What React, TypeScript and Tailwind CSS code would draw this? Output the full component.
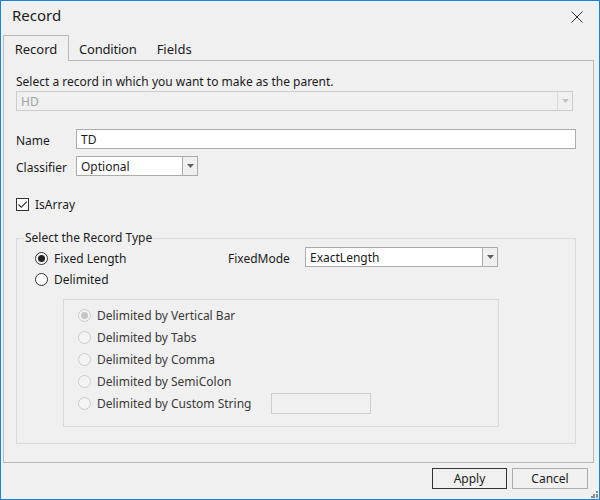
const font = { fontFamily: '"Noto Sans", "Segoe UI", sans-serif' };

function Arrow({ disabled }: { disabled?: boolean }) {
  return (
    <svg width="7" height="4" viewBox="0 0 7 4">
      <path d="M0 0h7L3.5 4z" fill={disabled ? "#c4c4c4" : "#606060"} />
    </svg>
  );
}

function Combo({ value, width, disabled }: { value: string; width: string; disabled?: boolean }) {
  return (
    <div
      className={`flex h-[20px] shrink-0 ${width} border ${
        disabled ? "border-[#cccccc] bg-[#f0f0f0] text-[#a0a0a0]" : "border-[#ababab] bg-white text-[#1b1b1b]"
      }`}
    >
      <div className="flex flex-1 items-center pl-[4px] pt-[2px]">{value}</div>
      <div
        className={`flex w-[15px] items-center justify-center border-l ${
          disabled ? "border-[#dadada]" : "border-[#ababab] bg-[#f0f0f0]"
        }`}
      >
        <Arrow disabled={disabled} />
      </div>
    </div>
  );
}

function Radio({ checked, disabled }: { checked?: boolean; disabled?: boolean }) {
  return (
    <span
      className={`flex h-[13px] w-[13px] shrink-0 items-center justify-center rounded-full border ${
        disabled ? "border-[#cccccc] bg-[#f4f4f4]" : "border-[#333333] bg-white"
      }`}
    >
      {checked && (
        <span
          className={`h-[7px] w-[7px] rounded-full ${disabled ? "bg-[#c4c4c4]" : "bg-[#222222]"}`}
        />
      )}
    </span>
  );
}

const delimiters = [
  "Delimited by Vertical Bar",
  "Delimited by Tabs",
  "Delimited by Comma",
  "Delimited by SemiColon",
];

export default function App() {
  return (
    <div
      style={font}
      className="relative flex h-[500px] w-[600px] flex-col border border-[#1883d7] bg-[#f0f0f0] text-[12px] leading-[16px] text-[#1b1b1b]"
    >
      {/* title bar */}
      <div className="flex h-[34px] shrink-0 items-center justify-between pl-[11px] pr-[16px]">
        <span className="mb-[6px] text-[15px] leading-none">Record</span>
        <svg width="12" height="12" viewBox="0 0 12 12" className="mb-[3px]">
          <path d="M0.5 0.5l11 11M11.5 0.5l-11 11" stroke="#333" strokeWidth="1" />
        </svg>
      </div>

      {/* tabs */}
      <div className="relative z-10 ml-[2px] flex h-[26px] items-stretch text-[13px]">
        <div className="flex w-[66px] items-center justify-center border-l border-r border-t border-[#b9b9b9] bg-[#f0f0f0] pt-[1px]">
          Record
        </div>
        <div className="flex items-center pl-[10px] pt-[1px] tracking-[-0.2px]">Condition</div>
        <div className="flex items-center pl-[20px] pt-[1px]">Fields</div>
      </div>

      {/* panel */}
      <div className="-mt-px ml-[2px] flex h-[403px] w-[591px] flex-col border border-[#b9b9b9] pl-[12px]">
        <div className="mt-[13px]">Select a record in which you want to make as the parent.</div>
        <div className="mt-[1px]">
          <Combo value="HD" width="w-[557px]" disabled />
        </div>

        <div className="mt-[18px] flex h-[20px] items-center">
          <span className="w-[60px] pt-[3px]">Name</span>
          <div className="flex h-[20px] w-[500px] items-center border border-[#ababab] bg-white pl-[4px] pt-[2px]">TD</div>
        </div>
        <div className="mt-[7px] flex h-[20px] items-center">
          <span className="w-[60px] pt-[3px]">Classifier</span>
          <Combo value="Optional" width="w-[122px]" />
        </div>

        <div className="mt-[22px] flex h-[13px] items-center">
          <span className="flex h-[13px] w-[13px] items-center justify-center border border-[#333333] bg-white">
            <svg width="11" height="11" viewBox="0 0 11 11">
              <path d="M1.5 5.5l2.8 2.8L9.8 2.6" stroke="#222" strokeWidth="1.1" fill="none" />
            </svg>
          </span>
          <span className="ml-[6px] pt-[1px]">IsArray</span>
        </div>

        <fieldset className="mt-[19px] w-[560px] border border-[#dadada] pb-[16px]">
          <legend className="ml-[7px] px-[1px]">Select the Record Type</legend>
          <div className="mt-[1px] flex h-[20px] pl-[18px]">
            <div className="flex w-[193px] items-center pt-[3px]">
              <Radio checked />
              <span className="ml-[6px]">Fixed Length</span>
            </div>
            <div className="flex w-[77px] items-center pt-[3px]">FixedMode</div>
            <Combo value="ExactLength" width="w-[193px]" />
          </div>
          <div className="mt-[4px] flex h-[16px] items-center pl-[18px]">
            <Radio />
            <span className="ml-[6px] pt-[2px]">Delimited</span>
          </div>

          <div className="ml-[46px] mt-[12px] flex h-[128px] w-[436px] flex-col border border-[#dadada] pl-[14px] pt-[4px] text-[#3a3a3a]">
            {delimiters.map((d, i) => (
              <div key={d} className="flex h-[22px] items-center">
                <Radio disabled checked={i === 0} />
                <span className="ml-[6px] pt-[1px]">{d}</span>
              </div>
            ))}
            <div className="flex h-[22px] items-center">
              <Radio disabled />
              <span className="ml-[6px] w-[174px] pt-[1px]">Delimited by Custom String</span>
              <div className="h-[21px] w-[100px] border border-[#cccccc] bg-[#f0f0f0]" />
            </div>
          </div>
        </fieldset>
      </div>

      {/* buttons */}
      <div className="mt-[5px] flex justify-end gap-[5px] pr-[11px]">
        <button className="flex h-[21px] w-[75px] items-center justify-center border border-[#333333] bg-[#f0f0f0] pt-[1px]">
          Apply
        </button>
        <button className="flex h-[21px] w-[76px] items-center justify-center border border-[#adadad] bg-[#f0f0f0] pt-[1px]">
          Cancel
        </button>
      </div>

      {/* size grip */}
      <svg width="7" height="7" viewBox="0 0 7 7" className="absolute bottom-[1px] right-[1px]">
        <g fill="#8a8a8a">
          <rect x="5" y="0" width="2" height="2" />
          <rect x="2" y="3" width="2" height="2" />
          <rect x="5" y="3" width="2" height="2" />
          <rect x="0" y="5" width="2" height="2" />
          <rect x="2" y="5" width="2" height="2" />
          <rect x="5" y="5" width="2" height="2" />
        </g>
      </svg>
    </div>
  );
}
